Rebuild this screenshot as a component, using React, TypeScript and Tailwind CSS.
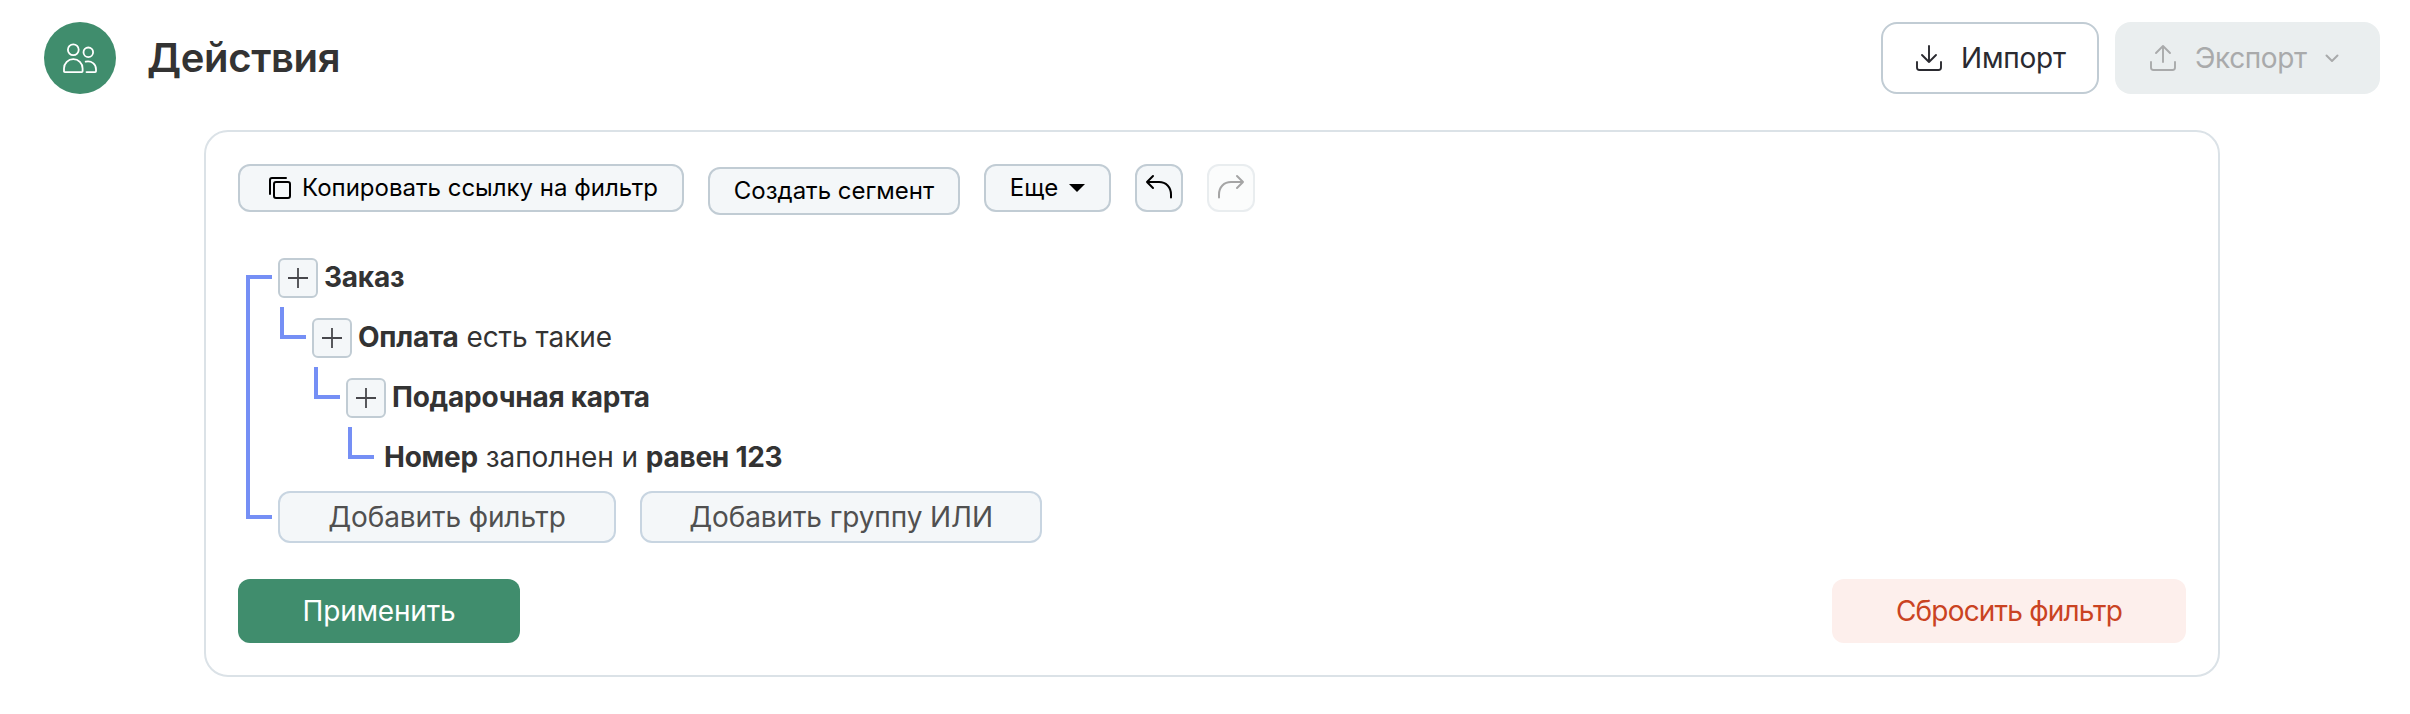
import type { ReactNode } from 'react';

function PeopleIcon() {
  return (
    <svg width="36" height="36" viewBox="0 0 36 36" fill="none" stroke="currentColor" strokeWidth="1.8" strokeLinecap="round" strokeLinejoin="round">
      <circle cx="11.3" cy="9.7" r="5.4" />
      <path d="M2 31.200v-2.800a9.300 9.300 0 0 1 18.600 0v2.800c0 .6-.3.9-.9.9H2.900c-.6 0-.9-.3-.9-.9z" />
      <circle cx="26.3" cy="12.3" r="4.8" />
      <path d="M23.700 21.700c6-1.200 10.300 2.500 10.300 7.500v2c0 .6-.3.9-.9.9h-8.600" />
    </svg>
  );
}

function TrayIcon({ up = false }: { up?: boolean }) {
  return (
    <svg width="32" height="32" viewBox="0 0 32 32" fill="none" stroke="currentColor" strokeWidth="1.9" strokeLinecap="round" strokeLinejoin="round">
      <path d="M4 20v5.500a2.500 2.500 0 0 0 2.500 2.500h19a2.500 2.500 0 0 0 2.500-2.500V20" />
      {up ? <path d="M16 20V4M9 11l7-7 7 7" /> : <path d="M16 4v16M9 13l7 7 7-7" />}
    </svg>
  );
}

function CopyIcon() {
  return (
    <svg width="24" height="24" viewBox="0 0 24 24" fill="none" stroke="currentColor" strokeWidth="2" strokeLinecap="round" strokeLinejoin="round">
      <rect x="6" y="6" width="16" height="16" rx="2" />
      <path d="M2 18V4a2 2 0 0 1 2-2h14" />
    </svg>
  );
}

function TurnIcon({ redo = false }: { redo?: boolean }) {
  return (
    <svg width="32" height="32" viewBox="0 0 32 32" fill="none" stroke="currentColor" strokeWidth="2" strokeLinecap="round" strokeLinejoin="round" className={redo ? '-scale-x-100' : ''}>
      <path d="M28 25.500v-3C28 15 23 10 16 10H4M10 4l-6 6 6 6" />
    </svg>
  );
}

const tool = 'flex h-12 shrink-0 items-center rounded-xl border-2 border-[#c1ccd4] bg-[#f4f7f9] text-2xl text-black';

function PlusButton() {
  return (
    <button className="flex size-10 shrink-0 items-center justify-center rounded-md border-2 border-[#c1ccd4] bg-[#f4f7f9] text-[#47474c]">
      <svg width="20" height="20" viewBox="0 0 20 20" stroke="currentColor" strokeWidth="1.8">
        <path d="M0 10h20M10 0v20" />
      </svg>
    </button>
  );
}

function Elbow() {
  return <div className="mr-1.5 mb-[29px] h-8 w-[26px] shrink-0 self-end border-b-4 border-l-4 border-[#758ff5]" />;
}

function TreeNode({ leaf = false, children }: { leaf?: boolean; children: ReactNode }) {
  return (
    <div className="flex h-10 items-start gap-1.5">
      {!leaf && <PlusButton />}
      <div className="text-[28px] leading-[38px] tracking-[-0.05px] whitespace-nowrap text-[#333]">{children}</div>
    </div>
  );
}

function Strong({ children }: { children: ReactNode }) {
  return <b className="font-bold tracking-[-0.25px]">{children}</b>;
}

export default function App() {
  return (
    <div className="h-[714px] w-[2410px] overflow-hidden bg-white font-['Inter',sans-serif] text-[#333]">
      <header className="flex items-center pt-[22px] pr-[30px] pl-11">
        <div className="flex size-[72px] items-center justify-center rounded-full bg-[#408d6d] text-white">
          <PeopleIcon />
        </div>
        <h1 className="ml-[31px] text-[40px] leading-[72px] font-[560] tracking-[-0.35px]">Действия</h1>
        <button className="ml-auto flex h-[72px] w-[218px] items-center rounded-2xl border-2 border-[#c1ccd4] pl-[30px] text-[28px] tracking-[-0.2px] text-[#2a2a30]">
          <TrayIcon />
          <span className="ml-[16px]">Импорт</span>
        </button>
        <button className="ml-4 flex h-[72px] w-[265px] items-center rounded-2xl bg-[#eaeeef] pl-8 text-[28px] tracking-[-0.4px] text-[#a9aaab]">
          <TrayIcon up />
          <span className="ml-[16px]">Экспорт</span>
          <svg className="ml-[17px]" width="16" height="16" viewBox="0 0 16 16" fill="none" stroke="currentColor" strokeWidth="2" strokeLinecap="round" strokeLinejoin="round">
            <path d="M2.500 5.500l5.500 5.500 5.500-5.500" />
          </svg>
        </button>
      </header>

      <main className="mt-9 ml-[204px] h-[547px] w-[2016px] rounded-3xl border-2 border-[#dbe2e7] px-8 pt-8">
        <div className="flex items-start gap-6">
          <button className={`${tool} w-[446px] pl-7`}>
            <CopyIcon />
            <span className="ml-2.5">Копировать ссылку на фильтр</span>
          </button>
          <button className={`${tool} mt-[3px] w-[252px] justify-center`}>Создать сегмент</button>
          <button className={`${tool} w-[127px] justify-center`}>
            Еще
            <svg className="ml-[11px]" width="16" height="8" viewBox="0 0 16 8" fill="currentColor">
              <path d="M0 0h16l-8 8z" />
            </svg>
          </button>
          <button className={`${tool} w-12 justify-center`}>
            <TurnIcon />
          </button>
          <button className={`${tool} w-12 justify-center opacity-35`}>
            <TurnIcon redo />
          </button>
        </div>

        <section className="mt-[33px] flex pl-2">
          <div className="mt-[27px] h-[244px] w-[26px] shrink-0 border-y-4 border-l-4 border-[#758ff5]" />
          <div className="ml-1.5 flex flex-col">
            <div className="flex h-[60px] items-center">
              <TreeNode><Strong>Заказ</Strong></TreeNode>
            </div>
            <div className="flex h-[60px] items-center pl-0.5">
              <Elbow />
              <TreeNode><Strong>Оплата</Strong> есть такие</TreeNode>
            </div>
            <div className="flex h-[60px] items-center pl-9">
              <Elbow />
              <TreeNode><Strong>Подарочная карта</Strong></TreeNode>
            </div>
            <div className="flex h-[60px] items-center pl-[70px]">
              <Elbow />
              <div className="ml-1">
                <TreeNode leaf><Strong>Номер</Strong> заполнен и <Strong>равен 123</Strong></TreeNode>
              </div>
            </div>
            <div className="mt-[3px] flex gap-6 text-[28px] tracking-[-0.1px] text-[#505050]">
              <button className="h-[52px] w-[338px] rounded-xl border-2 border-[#c8d5e1] bg-[#f4f7f9] leading-[48px]">Добавить фильтр</button>
              <button className="h-[52px] w-[402px] rounded-xl border-2 border-[#c8d5e1] bg-[#f4f7f9] leading-[48px]">Добавить группу ИЛИ</button>
            </div>
          </div>
        </section>

        <div className="mt-9 flex justify-between text-[28px]">
          <button className="h-16 w-[282px] rounded-xl bg-[#408d6d] tracking-[-0.2px] text-white">Применить</button>
          <button className="h-16 w-[354px] rounded-xl bg-[#fdefec] tracking-[-0.8px] text-[#ca4322]">Сбросить фильтр</button>
        </div>
      </main>
    </div>
  );
}
